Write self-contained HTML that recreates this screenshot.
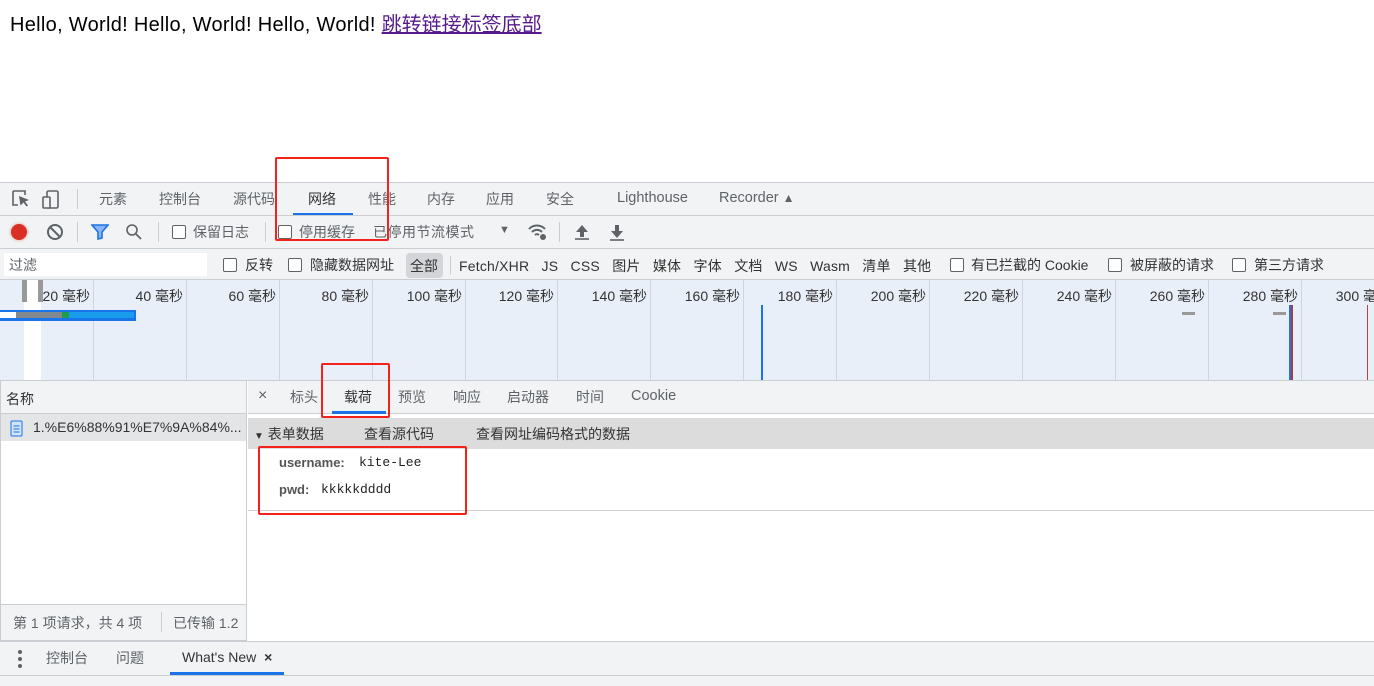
<!DOCTYPE html>
<html><head><meta charset="utf-8"><style>
*{box-sizing:border-box;margin:0;padding:0}
body{width:1374px;height:686px;overflow:hidden;background:#fff;font-family:"Liberation Sans","Noto Sans CJK SC",sans-serif;position:relative;color:#202124}
.a{position:absolute;white-space:nowrap}
.t{font-size:14px;color:#333}
.g{color:#5f6368}
.cb{position:absolute;width:14px;height:14px;border:1px solid #5f6368;border-radius:2px;background:#fff}
.vl{position:absolute;width:1px;background:#ccc}
.red{position:absolute;border:2px solid #f5221b;border-radius:2px}
</style></head><body>
<div class="a" style="left:10px;top:8px;font-size:20px;letter-spacing:0.3px;color:#000">Hello, World! Hello, World! Hello, World! <span style="color:#551a8b;text-decoration:underline;letter-spacing:0">跳转链接标签底部</span></div>

<!-- tab bar -->
<div class="a" style="left:0;top:182px;width:1374px;height:34px;background:#f1f3f4;border-top:1px solid #cacdd1;border-bottom:1px solid #cacdd1"></div>
<svg class="a" style="left:10px;top:189px" width="56" height="20" viewBox="0 0 56 20"><path d="M3 2h12v4M3 2v14h5" fill="none" stroke="#5f6368" stroke-width="1.6"/><path d="M9 7l10 4-4 1.5 3 4-1.5 1-3-4-3 3z" fill="#5f6368"/><rect x="37" y="2" width="11" height="17" rx="1.5" fill="none" stroke="#5f6368" stroke-width="1.6"/><rect x="33" y="8" width="7" height="11" rx="1" fill="#f1f3f4" stroke="#5f6368" stroke-width="1.6"/></svg>
<div class="vl" style="left:77px;top:189px;height:20px"></div>
<div class="a t g" style="left:99px;top:189px">元素</div>
<div class="a t g" style="left:159px;top:189px">控制台</div>
<div class="a t g" style="left:233px;top:189px">源代码</div>
<div class="a t" style="left:308px;top:189px">网络</div>
<div class="a" style="left:293px;top:213px;width:60px;height:2px;background:#1a73e8"></div>
<div class="a t g" style="left:368px;top:189px">性能</div>
<div class="a t g" style="left:427px;top:189px">内存</div>
<div class="a t g" style="left:486px;top:189px">应用</div>
<div class="a t g" style="left:546px;top:189px">安全</div>
<div class="a t g" style="left:617px;top:190px;font-size:14.5px">Lighthouse</div>
<div class="a t g" style="left:719px;top:190px;font-size:14.5px">Recorder <span style="font-size:12px">&#9650;</span></div>

<!-- toolbar -->
<div class="a" style="left:0;top:216px;width:1374px;height:33px;background:#f1f3f4;border-bottom:1px solid #cacdd1"></div>
<div class="a" style="left:11px;top:224px;width:16px;height:16px;border-radius:50%;background:#d93025;box-shadow:0 0 3px #f28b82"></div>
<svg class="a" style="left:46px;top:223px" width="18" height="18"><circle cx="9" cy="9" r="7" fill="none" stroke="#5f6368" stroke-width="2"/><path d="M4 4l10 10" stroke="#5f6368" stroke-width="2"/></svg>
<div class="vl" style="left:77px;top:222px;height:20px"></div>
<svg class="a" style="left:91px;top:224px" width="18" height="16"><path d="M1 1h16l-6 7v6l-4 1v-7z" fill="#8ab4f8" stroke="#1a73e8" stroke-width="1.6"/></svg>
<svg class="a" style="left:125px;top:223px" width="18" height="18"><circle cx="7" cy="7" r="5" fill="none" stroke="#5f6368" stroke-width="1.6"/><path d="M11 11l5 5" stroke="#5f6368" stroke-width="1.8"/></svg>
<div class="vl" style="left:158px;top:222px;height:20px"></div>
<div class="cb" style="left:172px;top:225px"></div>
<div class="a t g" style="left:193px;top:222px">保留日志</div>
<div class="vl" style="left:265px;top:222px;height:20px"></div>
<div class="cb" style="left:278px;top:225px"></div>
<div class="a t g" style="left:299px;top:222px">停用缓存</div>
<div class="a t g" style="left:373px;top:222px;letter-spacing:0.5px">已停用节流模式</div>
<div class="a g" style="left:499px;top:224px;font-size:11px">&#9660;</div>
<svg class="a" style="left:527px;top:222px" width="22" height="20"><path d="M2 7a11 11 0 0 1 16 0M5 10a7 7 0 0 1 10 0M8 13a3 3 0 0 1 4 0" fill="none" stroke="#5f6368" stroke-width="2"/><circle cx="16" cy="15" r="3" fill="#5f6368"/></svg>
<div class="vl" style="left:559px;top:222px;height:20px"></div>
<svg class="a" style="left:573px;top:223px" width="18" height="18"><path d="M9 2l-6 7h4v5h4v-5h4z" fill="#5f6368"/><path d="M2 16h14" stroke="#5f6368" stroke-width="1.6"/></svg>
<svg class="a" style="left:608px;top:223px" width="18" height="18"><path d="M9 15l-6-7h4v-6h4v6h4z" fill="#5f6368"/><path d="M2 17h14" stroke="#5f6368" stroke-width="1.6"/></svg>

<!-- filter row -->
<div class="a" style="left:0;top:249px;width:1374px;height:31px;background:#f1f3f4;border-bottom:1px solid #cacdd1"></div>
<div class="a" style="left:4px;top:253px;width:203px;height:23px;background:#fff"></div>
<div class="a t g" style="left:9px;top:255px">过滤</div>
<div class="cb" style="left:223px;top:258px"></div><div class="a t" style="left:245px;top:255px">反转</div>
<div class="cb" style="left:288px;top:258px"></div><div class="a t" style="left:310px;top:255px">隐藏数据网址</div>
<div class="a" style="left:406px;top:253px;width:37px;height:25px;background:#d3d5d8;border-radius:4px"></div>
<div class="a t" style="left:410px;top:256px">全部</div>
<div class="vl" style="left:450px;top:256px;height:18px"></div>
<div class="a t" style="left:459px;top:256px;letter-spacing:0.2px">Fetch/XHR&nbsp;&nbsp; JS&nbsp;&nbsp; CSS&nbsp;&nbsp; 图片&nbsp;&nbsp; 媒体&nbsp;&nbsp; 字体&nbsp;&nbsp; 文档&nbsp;&nbsp; WS&nbsp;&nbsp; Wasm&nbsp;&nbsp; 清单&nbsp;&nbsp; 其他</div>
<div class="cb" style="left:950px;top:258px"></div><div class="a t" style="left:971px;top:255px">有已拦截的 Cookie</div>
<div class="cb" style="left:1108px;top:258px"></div><div class="a t" style="left:1130px;top:255px">被屏蔽的请求</div>
<div class="cb" style="left:1232px;top:258px"></div><div class="a t" style="left:1254px;top:255px">第三方请求</div>

<!-- timeline -->
<div class="a" style="left:0;top:280px;width:1374px;height:100px;background:#e9eff9"></div>
<div class="a" style="left:24px;top:280px;width:17px;height:100px;background:#fff"></div>
<div id="tl"></div>
<div class="a" style="left:22px;top:280px;width:5px;height:22px;background:#999"></div>
<div class="a" style="left:38px;top:280px;width:5px;height:22px;background:#999"></div>
<div class="a" style="left:0;top:310px;width:136px;height:11px;background:#1a73e8"></div>
<div class="a" style="left:2px;top:312px;width:132px;height:6px;background:#1a9cec"></div>
<div class="a" style="left:0;top:312px;width:16px;height:6px;background:#fff"></div>
<div class="a" style="left:16px;top:312px;width:46px;height:6px;background:#808890"></div>
<div class="a" style="left:62px;top:312px;width:7px;height:6px;background:#1e9e4a"></div>
<div class="a" style="left:761px;top:305px;width:2px;height:75px;background:#1a73e8"></div>
<div class="a" style="left:1289px;top:305px;width:2px;height:75px;background:#1a73e8"></div>
<div class="a" style="left:1291px;top:305px;width:2px;height:75px;background:#b03a3a"></div>
<div class="a" style="left:1367px;top:305px;width:1px;height:75px;background:#c04040"></div>
<div class="a" style="left:1182px;top:312px;width:13px;height:3px;background:#999"></div>
<div class="a" style="left:1273px;top:312px;width:13px;height:3px;background:#999"></div>

<!-- lower area -->
<div class="a" style="left:0;top:380px;width:1374px;height:1px;background:#cacdd1"></div>
<div class="a" style="left:0;top:381px;width:247px;height:260px;border:1px solid #cacdd1;border-top:0;background:#fff"></div>
<div class="a" style="left:1px;top:381px;width:245px;height:33px;background:#f1f3f4;border-bottom:1px solid #cacdd1"></div>
<div class="a t" style="left:6px;top:389px">名称</div>
<div class="a" style="left:1px;top:414px;width:245px;height:27px;background:#e4e5e7"></div>
<svg class="a" style="left:10px;top:420px" width="13" height="17"><rect x="1" y="1" width="11" height="15" rx="1" fill="#d2e3fc" stroke="#1a73e8"/><path d="M3.5 6h6M3.5 9h6M3.5 12h6" stroke="#1a73e8"/></svg>
<div class="a t" style="left:33px;top:419px">1.%E6%88%91%E7%9A%84%...</div>
<div class="a" style="left:1px;top:604px;width:245px;height:36px;background:#f1f3f4;border-top:1px solid #cacdd1"></div>
<div class="a t g" style="left:13px;top:613px">第 1 项请求，共 4 项</div>
<div class="vl" style="left:161px;top:612px;height:20px"></div>
<div class="a t g" style="left:173px;top:613px">已传输 1.2</div>

<div class="a" style="left:248px;top:381px;width:1126px;height:33px;background:#f1f3f4;border-bottom:1px solid #cacdd1"></div>
<div class="a g" style="left:258px;top:387px;font-size:16px">×</div>
<div class="a t g" style="left:290px;top:387px">标头</div>
<div class="a t" style="left:344px;top:387px">载荷</div>
<div class="a" style="left:332px;top:411px;width:54px;height:3px;background:#1a73e8"></div>
<div class="a t g" style="left:398px;top:387px">预览</div>
<div class="a t g" style="left:453px;top:387px">响应</div>
<div class="a t g" style="left:507px;top:387px">启动器</div>
<div class="a t g" style="left:576px;top:387px">时间</div>
<div class="a t g" style="left:631px;top:388px;font-size:14.5px">Cookie</div>
<div class="a" style="left:248px;top:418px;width:1126px;height:31px;background:#dcdcdc"></div>
<div class="a t" style="left:254px;top:424px"><span style="font-size:10px">&#9660;</span> 表单数据</div>
<div class="a t" style="left:364px;top:424px">查看源代码</div>
<div class="a t" style="left:476px;top:424px">查看网址编码格式的数据</div>
<div class="a" style="left:279px;top:455px;font-size:13px;font-weight:bold;color:#555">username:</div>
<div class="a" style="left:359px;top:455px;font-size:13px;font-family:'Liberation Mono',monospace;color:#222">kite-Lee</div>
<div class="a" style="left:279px;top:482px;font-size:13px;font-weight:bold;color:#555">pwd:</div>
<div class="a" style="left:321px;top:482px;font-size:13px;font-family:'Liberation Mono',monospace;color:#222">kkkkkdddd</div>
<div class="a" style="left:248px;top:510px;width:1126px;height:1px;background:#d0d0d0"></div>

<!-- drawer -->
<div class="a" style="left:0;top:641px;width:1374px;height:45px;background:#f1f3f4;border-top:1px solid #cacdd1"></div>
<div class="a" style="left:0;top:675px;width:1374px;height:1px;background:#cacdd1"></div>
<div class="a" style="left:18px;top:650px;width:4px;height:4px;border-radius:50%;background:#5f6368;box-shadow:0 7px 0 #5f6368,0 14px 0 #5f6368"></div>
<div class="a t g" style="left:46px;top:648px">控制台</div>
<div class="a t g" style="left:116px;top:648px">问题</div>
<div class="a t" style="left:182px;top:649px">What's New <b style="margin-left:4px">×</b></div>
<div class="a" style="left:170px;top:672px;width:114px;height:3px;background:#1a73e8"></div>

<!-- red boxes -->
<div class="red" style="left:275px;top:157px;width:114px;height:84px"></div>
<div class="red" style="left:321px;top:363px;width:69px;height:55px"></div>
<div class="red" style="left:258px;top:446px;width:209px;height:69px"></div>

<script>
var tl=document.getElementById('tl'),h='';
var xs=[93,186,279,372,465,557,650,743,836,929,1022,1115,1208,1301];
for(var i=0;i<xs.length;i++){
 h+='<div class="vl" style="left:'+xs[i]+'px;top:280px;height:100px;background:#cfd6e0"></div>';
 h+='<div class="a t" style="left:'+(xs[i]-93)+'px;width:90px;text-align:right;top:286px">'+((i+1)*20)+' 毫秒</div>';
}
h+='<div class="a t" style="left:1301px;width:90px;text-align:right;top:286px">300 毫秒</div>';
tl.innerHTML=h;
</script>
</body></html>
